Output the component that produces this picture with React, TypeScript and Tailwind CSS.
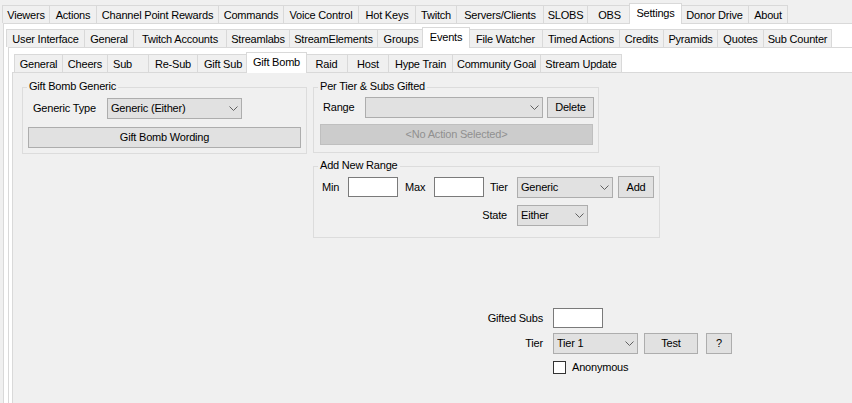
import React from "react";

type T = { label: string; w: string; sel?: boolean; left?: boolean };

const row1: T[] = [
  { label: "Viewers", w: "w-[47px]" },
  { label: "Actions", w: "w-[47px]" },
  { label: "Channel Point Rewards", w: "w-[122px]" },
  { label: "Commands", w: "w-[65px]" },
  { label: "Voice Control", w: "w-[75px]" },
  { label: "Hot Keys", w: "w-[57px]" },
  { label: "Twitch", w: "w-[41px]" },
  { label: "Servers/Clients", w: "w-[87px]" },
  { label: "SLOBS", w: "w-[44px]" },
  { label: "OBS", w: "w-[44px]" },
  { label: "Settings", w: "w-[53px]", sel: true },
  { label: "Donor Drive", w: "w-[68px]" },
  { label: "About", w: "w-[40px]" },
];

const row2: T[] = [
  { label: "User Interface", w: "w-[78px]" },
  { label: "General", w: "w-[49px]" },
  { label: "Twitch Accounts", w: "w-[93px]" },
  { label: "Streamlabs", w: "w-[63px]" },
  { label: "StreamElements", w: "w-[88px]" },
  { label: "Groups", w: "w-[47px]" },
  { label: "Events", w: "w-[48px]", sel: true },
  { label: "File Watcher", w: "w-[74px]" },
  { label: "Timed Actions", w: "w-[77px]" },
  { label: "Credits", w: "w-[44px]" },
  { label: "Pyramids", w: "w-[54px]" },
  { label: "Quotes", w: "w-[46px]" },
  { label: "Sub Counter", w: "w-[69px]" },
];

const row3: T[] = [
  { label: "General", w: "w-[48px]" },
  { label: "Cheers", w: "w-[45px]" },
  { label: "Sub", w: "w-[41px]", left: true },
  { label: "Re-Sub", w: "w-[49px]" },
  { label: "Gift Sub", w: "w-[51px]" },
  { label: "Gift Bomb", w: "w-[61px]", sel: true },
  { label: "Raid", w: "w-[42px]" },
  { label: "Host", w: "w-[41px]" },
  { label: "Hype Train", w: "w-[64px]" },
  { label: "Community Goal", w: "w-[88px]" },
  { label: "Stream Update", w: "w-[82px]" },
];

function Tabs({ tabs }: { tabs: T[] }) {
  return (
    <>
      {tabs.map((t, i) => {
        const last = i === tabs.length - 1;
        if (t.sel) {
          return (
            <div
              key={t.label}
              className={`relative z-10 -mx-[2px] mb-[-1px] flex h-[21px] shrink-0 items-start justify-center whitespace-nowrap border border-b-0 border-[#d9d9d9] bg-white pt-[3px] ${t.w}`}
            >
              {t.label}
            </div>
          );
        }
        return (
          <div
            key={t.label}
            className={`flex h-[18px] shrink-0 items-center whitespace-nowrap border-l border-t border-[#d9d9d9] bg-[#f0f0f0] pt-[2px] ${
              last ? "border-r" : ""
            } ${t.left ? "justify-start pl-[5px]" : "justify-center"} ${t.w}`}
          >
            {t.label}
          </div>
        );
      })}
    </>
  );
}

function Chevron() {
  return (
    <svg width="9" height="5" viewBox="0 0 9 5" className="shrink-0">
      <path d="M0.5 0.5 L4.5 4.5 L8.5 0.5" fill="none" stroke="#606060" strokeWidth="1" />
    </svg>
  );
}

function Combo({ w, text }: { w: string; text?: string }) {
  return (
    <div className={`flex h-[21px] shrink-0 items-center border border-[#adadad] bg-[#e1e1e1] pl-[3px] pr-[3px] ${w}`}>
      <span className="flex-1 truncate">{text}</span>
      <Chevron />
    </div>
  );
}

function Btn({ w, h = "h-[21px]", children }: { w: string; h?: string; children: React.ReactNode }) {
  return (
    <div className={`flex shrink-0 items-center justify-center border border-[#adadad] bg-[#e1e1e1] ${w} ${h}`}>
      {children}
    </div>
  );
}

function Input({ w }: { w: string }) {
  return <div className={`h-[20px] shrink-0 border border-[#7a7a7a] bg-white ${w}`} />;
}

function Group({ title, className, children }: { title: string; className: string; children: React.ReactNode }) {
  return (
    <div className={`relative shrink-0 border border-[#dcdcdc] ${className}`}>
      <span className="absolute left-[4px] top-[-8px] whitespace-nowrap bg-[#f0f0f0] px-[2px]">{title}</span>
      {children}
    </div>
  );
}

export default function App() {
  return (
    <div className="flex h-[403px] w-[852px] flex-col overflow-hidden bg-[#f0f0f0] font-['Liberation_Sans',Arial,sans-serif] text-[11px] leading-[13px] tracking-[-0.2px] text-black">
      <div className="flex h-[23px] shrink-0 items-end pl-[2px]">
        <Tabs tabs={row1} />
      </div>
      <div className="ml-[3px] flex flex-1 flex-col border-l border-t border-[#d9d9d9] bg-white">
        <div className="flex h-[23px] shrink-0 items-end pl-[2px]">
          <Tabs tabs={row2} />
        </div>
        <div className="ml-[4px] flex flex-1 flex-col border-l border-t border-[#d9d9d9] bg-white">
          <div className="flex h-[24px] shrink-0 items-end pl-[5px]">
            <Tabs tabs={row3} />
          </div>
          <div className="ml-[3px] flex flex-1 flex-col border-l border-t border-[#d9d9d9] bg-[#f0f0f0] pl-[9px] pt-[14px]">
            <div className="flex items-start">
              <Group title="Gift Bomb Generic" className="h-[67px] w-[285px] pt-[10px]">
                <div className="flex h-[21px] items-center">
                  <span className="w-[84px] shrink-0 pl-[10px]">Generic Type</span>
                  <Combo w="w-[135px]" text="Generic (Either)" />
                </div>
                <div className="mt-[8px] pl-[5px]">
                  <Btn w="w-[273px]">Gift Bomb Wording</Btn>
                </div>
              </Group>
              <div className="ml-[6px] flex flex-col">
                <Group title="Per Tier & Subs Gifted" className="h-[66px] w-[286px] pt-[9px]">
                  <div className="flex h-[21px] items-center">
                    <span className="w-[51px] shrink-0 pl-[9px]">Range</span>
                    <Combo w="w-[178px]" />
                    <div className="ml-[4px]">
                      <Btn w="w-[47px]">Delete</Btn>
                    </div>
                  </div>
                  <div className="mt-[6px] pl-[6px]">
                    <div className="flex h-[21px] w-[273px] items-center justify-center border border-[#bfbfbf] bg-[#cccccc] text-[#909090]">
                      &lt;No Action Selected&gt;
                    </div>
                  </div>
                </Group>
                <Group title="Add New Range" className="mt-[13px] h-[72px] w-[347px] pt-[9px]">
                  <div className="flex h-[22px] items-center pl-[8px]">
                    <span className="w-[26px] shrink-0">Min</span>
                    <Input w="w-[50px]" />
                    <span className="w-[36px] shrink-0 pl-[7px]">Max</span>
                    <Input w="w-[50px]" />
                    <span className="w-[33px] shrink-0 pl-[6px]">Tier</span>
                    <Combo w="w-[96px]" text="Generic" />
                    <div className="ml-[5px]">
                      <Btn w="w-[36px]" h="h-[22px]">Add</Btn>
                    </div>
                  </div>
                  <div className="mt-[7px] flex h-[21px] items-center">
                    <span className="w-[203px] shrink-0 pr-[10px] text-right">State</span>
                    <Combo w="w-[71px]" text="Either" />
                  </div>
                </Group>
              </div>
            </div>
            <div className="ml-[461px] mt-[70px] flex flex-col">
              <div className="flex h-[20px] items-center">
                <span className="w-[60px] shrink-0 text-right">Gifted Subs</span>
                <div className="ml-[10px]">
                  <Input w="w-[50px]" />
                </div>
              </div>
              <div className="mt-[5px] flex h-[21px] items-center">
                <span className="w-[60px] shrink-0 text-right">Tier</span>
                <div className="ml-[10px] flex items-center">
                  <Combo w="w-[85px]" text="Tier 1" />
                  <div className="ml-[6px]">
                    <Btn w="w-[54px]">Test</Btn>
                  </div>
                  <div className="ml-[8px]">
                    <Btn w="w-[26px]">?</Btn>
                  </div>
                </div>
              </div>
              <div className="mt-[7px] flex h-[13px] items-center pl-[70px]">
                <div className="h-[13px] w-[13px] shrink-0 border border-[#333333] bg-white" />
                <span className="ml-[6px]">Anonymous</span>
              </div>
            </div>
          </div>
        </div>
      </div>
    </div>
  );
}
